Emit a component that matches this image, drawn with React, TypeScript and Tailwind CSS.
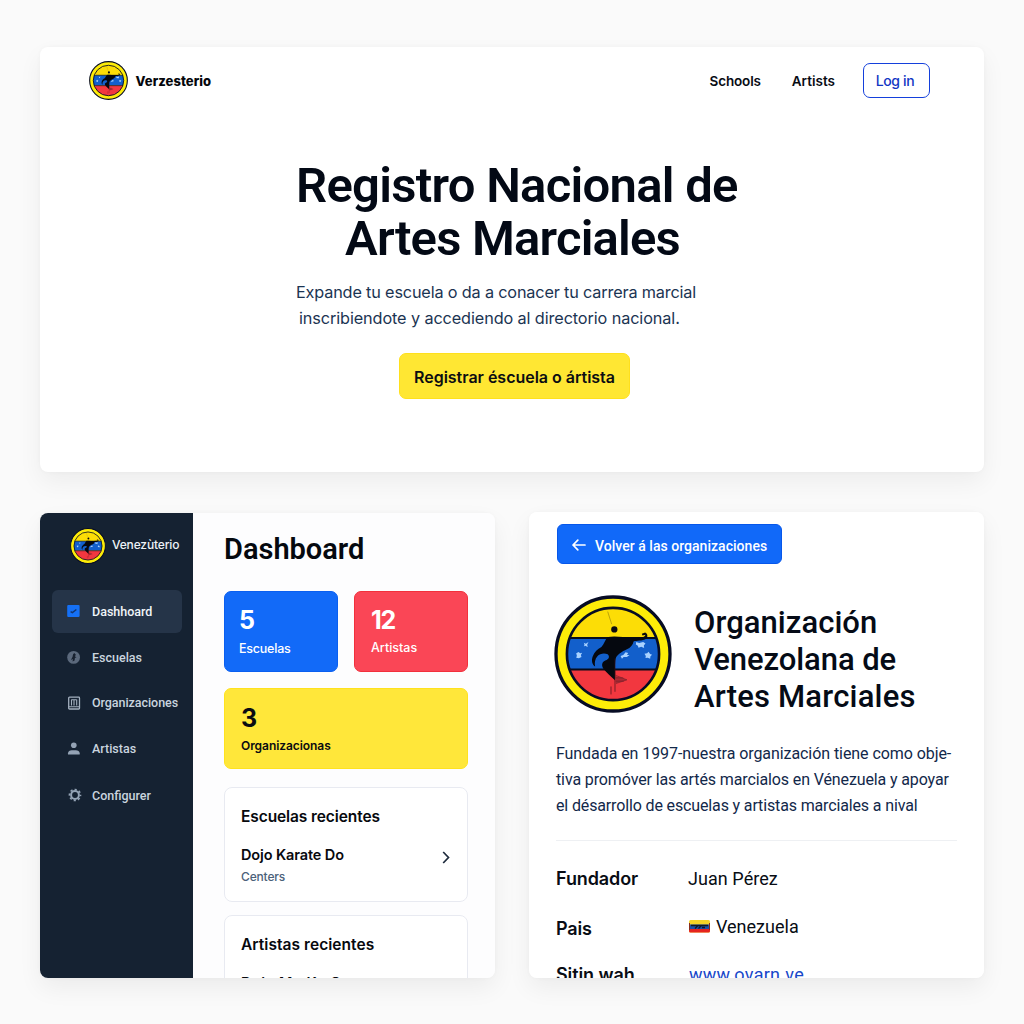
import React, { useId } from "react";

function Emblem({ className }: { className: string }) {
  const id = useId();
  return (
    <svg viewBox="27 30 356 356" className={className} aria-hidden="true">
      <defs>
        <clipPath id={id}>
          <circle cx="205" cy="208" r="139" />
        </clipPath>
      </defs>
      <circle cx="205" cy="208" r="172" fill="#fdec08" stroke="#070c24" strokeWidth="10" />
      <g clipPath={`url(#${id})`}>
        <rect x="60" y="60" width="290" height="100" fill="#fcdd06" />
        <rect x="60" y="160" width="290" height="94" fill="#125fcb" />
        <rect x="60" y="254" width="290" height="100" fill="#f2373f" />
        <path d="M60 160H350M60 255H350" stroke="#070c1c" strokeWidth="6" />
      </g>
      <circle cx="205" cy="208" r="139" fill="none" stroke="#070c24" strokeWidth="8" />
      <path d="M189 80l12 38" stroke="#7b6a10" strokeWidth="1.5" />
      <circle cx="209" cy="134" r="9.5" fill="#0a0a12" />
      <path
        d="M190 157C208 152 238 158 262 158L290 157C297 158 301 155 303 150L294 152 292 147 302 143C309 146 311 154 306 161C293 170 276 166 267 170C265 181 258 188 247 194C232 201 217 210 213 222C209 237 213 262 211 287C198 276 184 262 175 251C169 239 173 229 186 226C194 222 195 214 189 209C180 205 165 206 158 215C150 224 149 235 151 246C142 240 139 228 144 215C149 202 158 193 170 187C179 178 181 164 190 157Z"
        fill="#05080f"
      />
      <path d="M211 222V322M199 306V330" stroke="#3a1018" strokeWidth="2" />
      <path d="M212 274L247 286 214 296z" fill="#74202a" fillOpacity="0.55" />
      <path d="M212 272L247 286 214 297M212 280H236M213 290H238" fill="none" stroke="#74202a" strokeWidth="2" />
      <g fill="#a9d2ff">
        <path d="M117 174l6 3 8-5-4 8 2 7-8-4-4 2 2-5z" />
        <path d="M94 206l7-4 5 4 6-2-4 7 2 6-8 4-8-2 2-6z" />
        <path d="M275 172l9 3 12-3 7 4-5 6 1 8-9-4-8 3-2-6-6-4z" />
        <path d="M300 207l8-1 4-5 5 7 6 2-5 5-1 7-7-3-7 1 1-6z" />
        <path d="M228 214l8-3 7-8 8 2-4 6 8 0-8 6-10 0-5 5z" />
      </g>
    </svg>
  );
}

function DashboardIcon() {
  return (
    <svg viewBox="0 0 14 14" className="size-[14px]">
      <rect x="0.2" y="0.9" width="12.4" height="12" rx="1.2" fill="#1570f5" />
      <path d="M3.6 7.6l1.8 1.1L9.4 5.5" fill="none" stroke="#12356f" strokeWidth="1.5" />
    </svg>
  );
}

function SchoolIcon() {
  return (
    <svg viewBox="0 0 14 14" className="size-[14px]">
      <circle cx="6.6" cy="7.4" r="6.4" fill="#5b697c" />
      <path d="M7.2 3L8.8 4.4 8 6.4l1.5.8-1.6.8L7.6 10.4l-2 1 .3-2.4-2 1L5.6 6.8 6 4.4z" fill="#17212f" />
    </svg>
  );
}

function OrgIcon() {
  return (
    <svg viewBox="0 0 14 14" className="size-[14px]" fill="none" stroke="#a3b0bf">
      <rect x="1.7" y="1.2" width="10.8" height="11.8" rx="0.8" strokeWidth="1.3" />
      <path d="M4.5 3.5v6M7 3.5v6M9.7 3.5v6M4.5 3.8h5M2 10.8h10" strokeWidth="1.1" />
    </svg>
  );
}

function ArtistIcon() {
  return (
    <svg viewBox="0 0 14 14" className="size-[14px]" fill="#94a3b5">
      <circle cx="6.8" cy="3.2" r="2.8" />
      <path d="M1 12.5v-1.3C1 9.2 2.8 8.2 4.8 8.2h4c2 0 3.9 1 3.9 3v1.3z" />
    </svg>
  );
}

function GearIcon() {
  return (
    <svg viewBox="0 0 14 14" className="ml-px size-[14px]" fill="none" stroke="#94a3b5">
      <circle cx="7" cy="7" r="3.9" strokeWidth="2" />
      <circle cx="7" cy="7" r="5.5" strokeWidth="1.7" strokeDasharray="2.2 2.12" strokeDashoffset="1.1" />
    </svg>
  );
}

const navItems = [
  { label: "Dashhoard", icon: <DashboardIcon />, text: "mt-[2px]", active: true },
  { label: "Escuelas", icon: <SchoolIcon />, text: "mt-[2px]", active: false },
  { label: "Organizaciones", icon: <OrgIcon />, text: "tracking-[-0.05px]", active: false },
  { label: "Artistas", icon: <ArtistIcon />, text: "", active: false },
  { label: "Configurer", icon: <GearIcon />, text: "mt-[2px]", active: false },
];

function Hero() {
  return (
    <section className="h-[425px] rounded-lg bg-white shadow-[0_10px_24px_rgba(0,0,0,0.055),0_0_4px_rgba(0,0,0,0.03)]">
      <header className="flex h-[67px] items-center pr-[54px] pl-[49px]">
        <Emblem className="mb-px size-[39px]" />
        <span className="mt-[2px] ml-[7.5px] text-[13px] font-extrabold tracking-[0.08px] text-[#05070c]">Verzesterio</span>
        <nav className="ml-auto flex items-center text-sm">
          <a className="mt-[2px] mr-[31px] text-[13.5px] font-semibold tracking-[-0.15px]">Schools</a>
          <a className="mt-[2px] mr-[28px] text-[13.5px] font-semibold">Artists</a>
          <a className="flex h-[35px] w-[67px] items-center justify-center rounded-[7px] border border-[#1440dc] pr-[3px] font-medium tracking-[-0.35px] text-[#1236c4]">
            Log in
          </a>
        </nav>
      </header>
      <div className="flex flex-col items-start pt-[45px] pl-[253px]">
        <h1 className="pl-[3px] font-['Roboto',sans-serif] text-[49px] leading-[53px] font-semibold tracking-[-0.72px] whitespace-nowrap text-[#030915]">
          <span className="block">Registro Nacional de</span>
          <span className="block pl-[49px] tracking-[-0.8px]">Artes Marciales</span>
        </h1>
        <p className="mt-[15px] pl-[3px] text-[16.25px] leading-[25.5px] font-normal tracking-[-0.17px] whitespace-nowrap text-[#1b3452]">
          <span className="block">Expande tu escuela o da a conacer tu carrera marcial</span>
          <span className="block pl-[3px] tracking-[-0.11px]">inscribiendote y accediendo al directorio nacional.</span>
        </p>
        <button className="mt-[22px] ml-[106px] flex h-[46px] w-[231px] items-center justify-center rounded-[7px] border border-[#ffe01c] bg-[#ffe733] pt-0.5 text-base font-semibold tracking-[-0.02px] whitespace-nowrap text-[#0c0d12]">
          Registrar éscuela o ártista
        </button>
      </div>
    </section>
  );
}

function Sidebar() {
  return (
    <aside className="w-[153px] shrink-0 bg-[#152232] pt-[15px]">
      <div className="flex items-center pl-[30px]">
        <Emblem className="size-9" />
        <span className="mb-[2px] ml-[6px] text-xs font-medium tracking-[-0.15px] text-[#eef2f7]">Venezùterio</span>
      </div>
      <ul className="mt-6 pl-3 font-['Roboto',sans-serif] text-[12.5px] font-medium">
        {navItems.map((item) => (
          <li key={item.label} className="flex h-[46px] items-center">
            <a
              className={
                item.active
                  ? "flex h-[43px] w-[130px] items-center rounded-md bg-[#253448] pl-[15px] text-[#f1f5f9]"
                  : "flex h-[43px] w-[130px] items-center pl-[15px] text-[#c9d4df]"
              }
            >
              <span className="flex w-[25px]">{item.icon}</span>
              <span className={item.text}>{item.label}</span>
            </a>
          </li>
        ))}
      </ul>
    </aside>
  );
}

function Dashboard() {
  return (
    <section className="flex h-[465px] w-[455px] overflow-hidden rounded-lg bg-[#fdfdfe]">
      <Sidebar />
      <div className="w-[275px] pt-[18px] pl-[31px]">
        <h2 className="font-['Roboto',sans-serif] text-[29px] leading-9 font-semibold text-[#05090f]">Dashboard</h2>
        <div className="mt-6 grid grid-cols-2 gap-4">
          <div className="h-[81px] rounded-[7px] border border-[#0a5ff0] bg-[#126af8] pt-[15px] pl-[14px] text-white">
            <p className="text-[25px] leading-[26px] font-bold">5</p>
            <p className="mt-[7px] text-[12.5px] leading-[18px] font-medium tracking-[-0.22px]">Escuelas</p>
          </div>
          <div className="h-[81px] rounded-[7px] border border-[#f2303c] bg-[#fa4656] pt-[15px] pl-4 text-white">
            <p className="text-[25px] leading-[26px] font-bold tracking-[-1.2px]">12</p>
            <p className="mt-[6px] text-[12.5px] leading-[18px] font-medium">Artistas</p>
          </div>
          <div className="col-span-2 h-[81px] rounded-[7px] border border-[#ffe21e] bg-[#ffe73a] pt-[16px] pl-4 text-[#0a0c12]">
            <p className="text-[25px] leading-[26px] font-bold">3</p>
            <p className="mt-[6px] text-xs leading-[18px] font-semibold tracking-[-0.06px]">Organizacionas</p>
          </div>
        </div>
        <article className="mt-[18px] h-[115px] rounded-lg border border-[#e8eaf1] bg-white pt-[17px] pl-4">
          <h3 className="text-[15.5px] leading-6 font-semibold tracking-[-0.1px] text-[#07090e]">Escuelas recientes</h3>
          <div className="mt-[16px] flex items-center justify-between pr-[17px]">
            <div>
              <p className="text-[14.5px] leading-5 font-semibold tracking-[-0.12px] text-[#07090e]">Dojo Karate Do</p>
              <p className="mt-[3px] text-xs leading-[18px] font-medium tracking-[-0.15px] text-[#4b617a]">Centers</p>
            </div>
            <svg viewBox="0 0 8 13" className="mb-[16px] h-[13px] w-2" fill="none" stroke="#1d2a3c" strokeWidth="1.7">
              <path d="M1.2 1l5.3 5.5L1.2 12" />
            </svg>
          </div>
        </article>
        <article className="mt-[13px] h-[115px] rounded-lg border border-[#e8eaf1] bg-white pt-[17px] pl-4">
          <h3 className="text-[15.5px] leading-6 font-semibold tracking-[0.05px] text-[#07090e]">Artistas recientes</h3>
          <p className="mt-[16px] text-[14.5px] leading-5 font-semibold tracking-[0.5px] text-[#07090e]">Dojo Mo Ka O</p>
        </article>
      </div>
    </section>
  );
}

function Flag() {
  return (
    <svg viewBox="0 0 21 13" className="mr-[6px] mb-px ml-px h-[13px] w-[21px]">
      <rect width="21" height="12.5" rx="1.5" fill="#f5d327" />
      <rect y="4.5" width="21" height="4.5" fill="#1d4fa6" />
      <path d="M0 9h21v2a1.5 1.5 0 0 1-1.5 1.5h-18A1.5 1.5 0 0 1 0 11z" fill="#e5241f" />
      <path d="M2 5.5h17M6 8.5l3-3M9.5 8.5l3-3M13 7.5h3" stroke="#101828" strokeWidth="1.3" />
      <path d="M0.5 3v7M20.5 3v7" stroke="#8a2c1c" strokeWidth="1" />
    </svg>
  );
}

function Organization() {
  return (
    <section className="h-[466px] w-[455px] overflow-hidden rounded-lg bg-white pt-[12px] pl-[27px]">
      <button className="ml-[1px] flex h-10 w-[225px] items-center rounded-md border border-[#0757ea] bg-[#1169f9] pl-[14px] text-white">
        <svg viewBox="0 0 14 12" className="mt-px h-3 w-[14px]" fill="none" stroke="currentColor" strokeWidth="1.7" strokeLinecap="round" strokeLinejoin="round">
          <path d="M13 6H1M5.8 1.2L1 6l4.8 4.8" />
        </svg>
        <span className="mt-[3px] ml-[9px] font-['Roboto',sans-serif] text-sm font-medium tracking-[0.03px]">Volver á las organizaciones</span>
      </button>
      <div className="mt-[31px] flex">
        <Emblem className="-ml-[2px] size-[118px]" />
        <h2 className="mt-[10px] ml-[22px] font-['Roboto',sans-serif] text-[31px] leading-[36.8px] font-medium text-[#050b16]">
          <span className="block tracking-[0.05px]">Organización</span>
          <span className="block tracking-[-0.08px]">Venezolana de</span>
          <span className="block tracking-[0.2px]">Artes Marciales</span>
        </h2>
      </div>
      <p className="mt-[25.4px] font-['Roboto',sans-serif] text-base leading-[26px] tracking-[-0.07px] whitespace-nowrap text-[#12284a]">
        <span className="block">Fundada en 1997-nuestra organización tiene como obje-</span>
        <span className="block tracking-[-0.12px]">tiva promóver las artés marcialos en Vénezuela y apoyar</span>
        <span className="block tracking-[-0.14px]">el désarrollo de escuelas y artistas marciales a nival</span>
      </p>
      <dl className="mt-[21px] w-[401px] border-t border-[#eef0f3] pt-[26px] text-lg leading-6">
        <div className="flex">
          <dt className="w-[132px] font-semibold tracking-[-0.1px]">Fundador</dt>
          <dd className="font-['Roboto',sans-serif] tracking-[0.06px]">Juan Pérez</dd>
        </div>
        <div className="mt-[24px] flex items-start">
          <dt className="mt-[2px] w-[132px] font-semibold tracking-[-0.2px]">Pais</dt>
          <dd className="flex items-center font-['Roboto',sans-serif]"><Flag />Venezuela</dd>
        </div>
        <div className="mt-[22px] flex">
          <dt className="w-[133px] font-semibold tracking-[-0.1px]">Sitin wah</dt>
          <dd className="font-['Roboto',sans-serif] tracking-[0.28px] text-[#1747c9]">www.ovarn.ve</dd>
        </div>
      </dl>
    </section>
  );
}

export default function App() {
  return (
    <main className="h-[1024px] w-[1024px] overflow-hidden bg-[#fafafa] px-10 pt-[47px] font-['Inter',sans-serif] text-[#080c14]">
      <Hero />
      <div className="mt-[40px] flex items-end justify-between">
        <div className="rounded-lg shadow-[0_10px_24px_rgba(0,0,0,0.06),0_0_4px_rgba(0,0,0,0.03)]">
          <Dashboard />
        </div>
        <div className="rounded-lg shadow-[0_10px_24px_rgba(0,0,0,0.06),0_0_4px_rgba(0,0,0,0.03)]">
          <Organization />
        </div>
      </div>
    </main>
  );
}
